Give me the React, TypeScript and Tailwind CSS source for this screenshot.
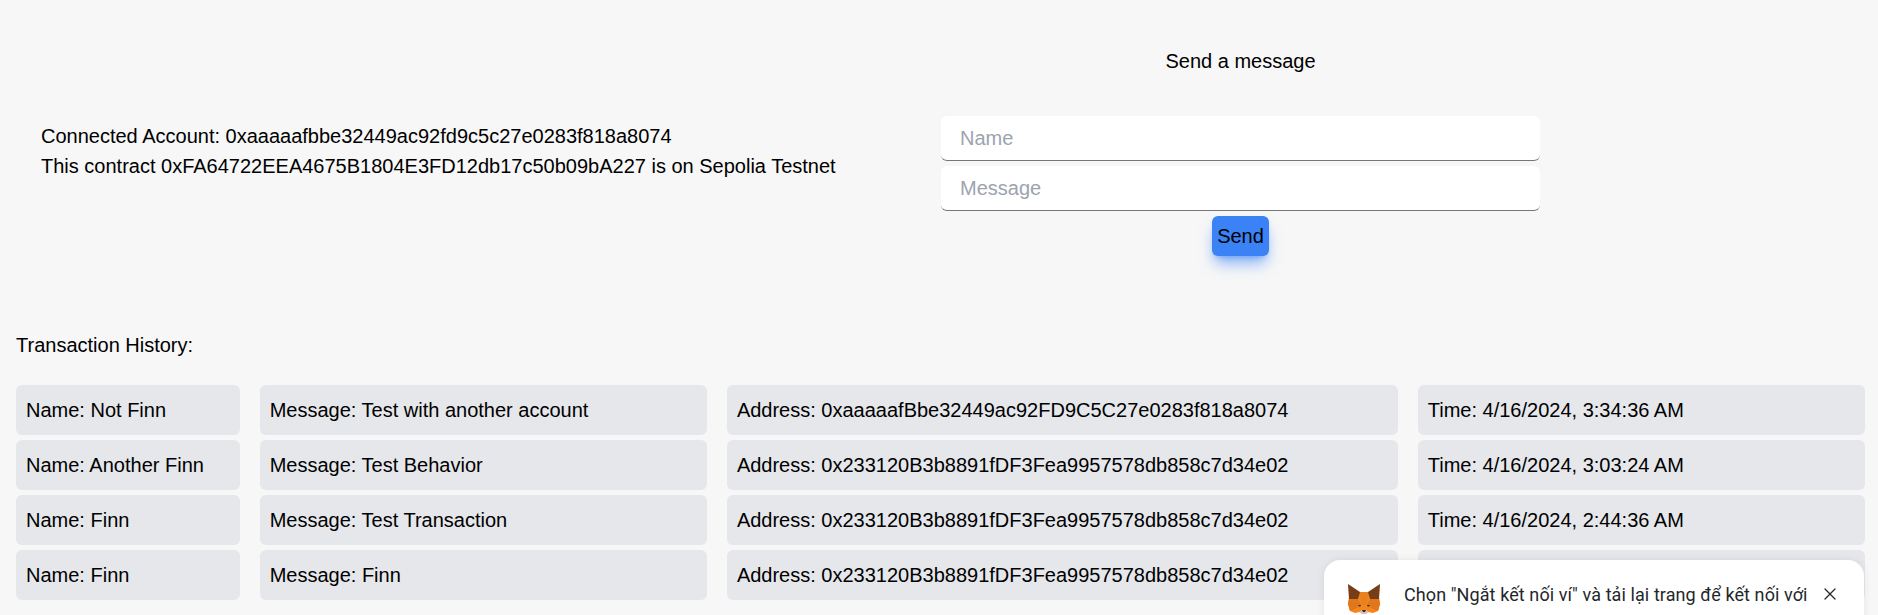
import React from 'react';
import { X } from 'lucide-react';

const rows = [
  { name: 'Not Finn', message: 'Test with another account', address: '0xaaaaafBbe32449ac92FD9C5C27e0283f818a8074', time: '4/16/2024, 3:34:36 AM' },
  { name: 'Another Finn', message: 'Test Behavior', address: '0x233120B3b8891fDF3Fea9957578db858c7d34e02', time: '4/16/2024, 3:03:24 AM' },
  { name: 'Finn', message: 'Test Transaction', address: '0x233120B3b8891fDF3Fea9957578db858c7d34e02', time: '4/16/2024, 2:44:36 AM' },
  // the toast covers the time of this row in the screenshot
  { name: 'Finn', message: 'Finn', address: '0x233120B3b8891fDF3Fea9957578db858c7d34e02', time: '' },
];

function Cell({ children }: { children?: React.ReactNode }) {
  return (
    <div className="min-w-0 h-[50px] flex items-center px-2.5 rounded-md bg-[#e5e7eb] whitespace-nowrap overflow-hidden">
      {children}
    </div>
  );
}

function Fox() {
  return (
    <svg viewBox="0 0 32 30" className="w-8 h-[30px] shrink-0">
      {/* head */}
      <polygon points="1,14 11,8 21,8 31,14 32,20 30,27 25,29 20,28 12,28 7,29 2,27 0,20" fill="#f6851b" />
      <polygon points="11,8 21,8 18,21 14,21" fill="#e8821e" />
      <polygon points="1,14 10,15 13,21 9,24 2,27 0,20" fill="#e2761b" />
      <polygon points="31,14 22,15 19,21 23,24 30,27 32,20" fill="#e2761b" />
      {/* ears */}
      <polygon points="0,0 12,8 10,15 1,15" fill="#763d16" />
      <polygon points="32,0 20,8 22,15 31,15" fill="#763d16" />
      {/* eyes */}
      <polygon points="10,21 13,21 12,23" fill="#233447" />
      <polygon points="22,21 19,21 20,23" fill="#233447" />
      {/* muzzle */}
      <polygon points="11,28 14,26 18,26 21,28 18,30 14,30" fill="#d7c1b3" />
      <polygon points="14,26 18,26 17,28 15,28" fill="#3a2a20" />
    </svg>
  );
}

export default function App() {
  return (
    <div className="relative h-[615px] overflow-hidden bg-[#f7f7f7] text-black text-xl font-['Liberation_Sans',Arial,sans-serif]">
      <div className="flex items-center pt-[47px] pl-[41px]">
        <div className="w-[900px] leading-[30px] pb-0.5">
          <p>Connected Account: 0xaaaaafbbe32449ac92fd9c5c27e0283f818a8074</p>
          <p>This contract 0xFA64722EEA4675B1804E3FD12db17c50b09bA227 is on Sepolia Testnet</p>
        </div>
        <div className="w-[599px] flex flex-col items-center">
          <p className="mb-[41px] leading-7">Send a message</p>
          <input
            placeholder="Name"
            className="w-full h-[45px] mb-[5px] pl-[19px] pr-5 bg-white rounded-md border-b border-[#777] outline-none placeholder:text-[#9ca3af]"
          />
          <input
            placeholder="Message"
            className="w-full h-[45px] mb-[5px] pl-[19px] pr-5 bg-white rounded-md border-b border-[#777] outline-none placeholder:text-[#9ca3af]"
          />
          <button className="h-10 w-[57px] rounded-md bg-[#3b82f6] shadow-[0_10px_15px_-3px_rgba(59,130,246,0.6),0_4px_6px_-4px_rgba(59,130,246,0.6)]">Send</button>
        </div>
      </div>

      <div className="pl-4 pr-[13px] mt-[75px]">
        <p className="leading-7 mb-[26px]">Transaction History:</p>
        <div className="flex flex-col gap-[5px]">
          {rows.map((row, i) => (
            <div key={i} className="grid grid-cols-[1fr_2fr_3fr_2fr] gap-5">
              <Cell>Name: {row.name}</Cell>
              <Cell>Message: {row.message}</Cell>
              <Cell>Address: {row.address}</Cell>
              <Cell>{row.time && `Time: ${row.time}`}</Cell>
            </div>
          ))}
        </div>
      </div>

      {/* metamask toast */}
      <div className="absolute left-[1324px] top-[560px] w-[540px] h-[80px] bg-white rounded-2xl shadow-[0_0_8px_rgba(0,0,0,0.08)] pl-6 pr-6 pt-6 flex items-start">
        <Fox />
        <p className="ml-6 text-lg tracking-[0.09px] leading-[22px] text-[#24272a] whitespace-nowrap font-['Roboto',sans-serif]">
          Chọn "Ngắt kết nối ví" và tải lại trang để kết nối với
        </p>
        <X className="ml-auto w-5 h-5 text-[#24272a]" strokeWidth={1.5} />
      </div>
    </div>
  );
}
